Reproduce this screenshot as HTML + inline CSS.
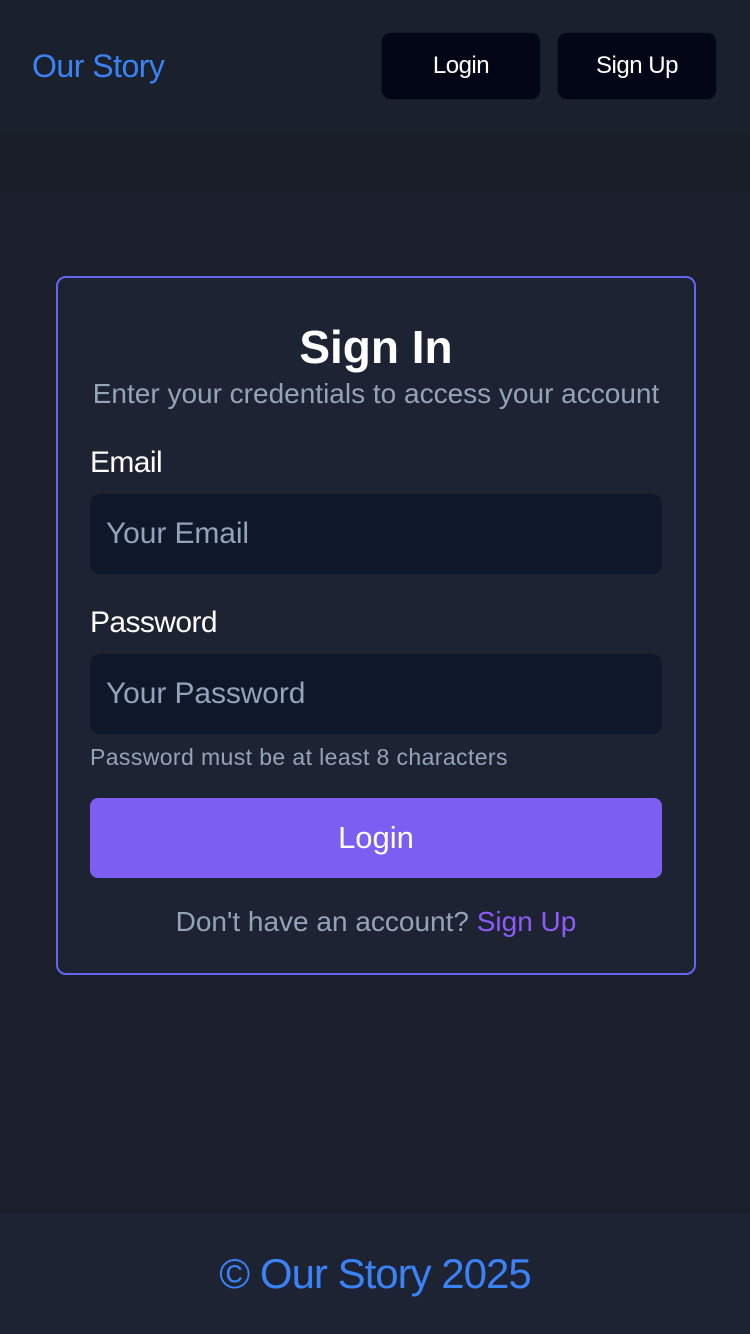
<!DOCTYPE html>
<html><head><meta charset="utf-8"><style>
*{box-sizing:border-box;margin:0;padding:0}
body{width:750px;height:1334px;background:#1a1f2b;font-family:"Liberation Sans",sans-serif;position:relative;overflow:hidden}
.hdr{position:absolute;top:0;left:0;width:750px;height:132px;background:#1b202d}
.band{position:absolute;top:132px;left:0;width:750px;height:58px;background:#191e29}
.logo{position:absolute;left:32px;top:48px;color:#3b82f6;font-size:32px;letter-spacing:-0.5px}
.nb{position:absolute;top:32px;width:160px;height:68px;background:#020617;border:1px solid #141a28;border-radius:10px;color:#fff;font-size:24px;display:flex;align-items:center;justify-content:center;letter-spacing:-0.5px}
.card{position:absolute;left:56px;top:276px;width:640px;height:699px;background:#1e2333;border:2px solid #6366f1;border-radius:10px}
h1{position:absolute;top:42px;width:100%;text-align:center;color:#fff;font-size:46px;font-weight:bold;font-family:"Liberation Sans",sans-serif}
.sub{position:absolute;top:100px;width:100%;text-align:center;color:#94a3b8;font-size:28px;letter-spacing:0}
.lbl{position:absolute;left:32px;color:#fff;font-size:30px;letter-spacing:-0.6px}
.inp{position:absolute;left:32px;width:572px;height:80px;background:#0f172a;border-radius:10px;color:#94a3b8;font-size:30px;padding-left:16px;display:flex;align-items:center;letter-spacing:-0.1px}
.hint{position:absolute;left:32px;top:466px;color:#94a3b8;font-size:23px;letter-spacing:0.4px}
.btn{position:absolute;left:32px;top:520px;width:572px;height:80px;background:#7c5ff2;border-radius:8px;color:#fff;font-size:31px;display:flex;align-items:center;justify-content:center}
.alt{position:absolute;top:628px;width:100%;text-align:center;color:#94a3b8;font-size:28px;letter-spacing:0}
.alt span{color:#8b5cf6}
.ftr{position:absolute;top:1214px;left:0;width:750px;height:120px;background:#1e2333;color:#3b82f6;font-size:42px;display:flex;align-items:center;justify-content:center;letter-spacing:-1px}
</style></head><body>
<div class="hdr"></div><div class="band"></div>
<div class="logo">Our Story</div>
<div class="nb" style="left:381px">Login</div>
<div class="nb" style="left:557px">Sign Up</div>
<div class="card">
<h1>Sign In</h1>
<div class="sub">Enter your credentials to access your account</div>
<div class="lbl" style="top:168px">Email</div>
<div class="inp" style="top:216px">Your Email</div>
<div class="lbl" style="top:328px">Password</div>
<div class="inp" style="top:376px">Your Password</div>
<div class="hint">Password must be at least 8 characters</div>
<div class="btn">Login</div>
<div class="alt">Don't have an account? <span>Sign Up</span></div>
</div>
<div class="ftr">© Our Story 2025</div>
</body></html>
